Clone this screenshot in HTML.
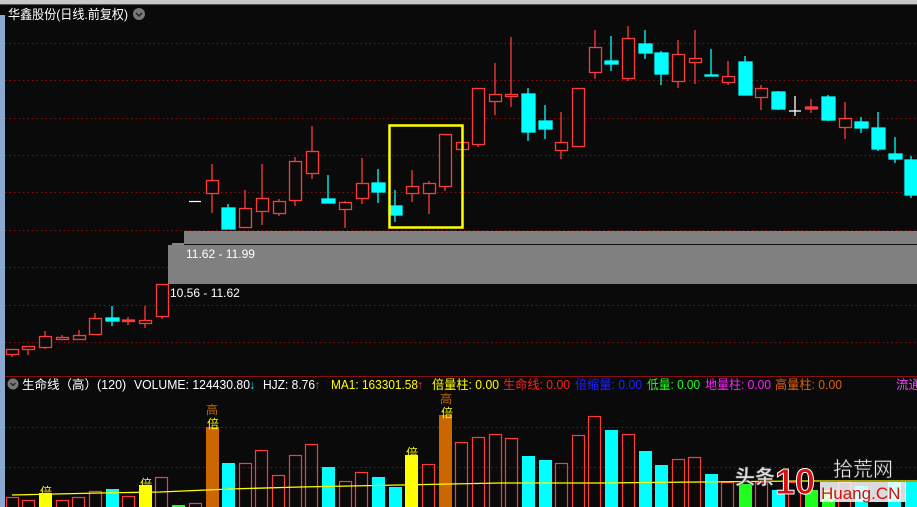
<!DOCTYPE html>
<html><head><meta charset="utf-8"><style>
html,body{margin:0;padding:0;background:#0a0a0a;width:917px;height:507px;overflow:hidden}
svg{display:block}
text{font-family:"Liberation Sans","Noto Sans CJK SC",sans-serif}
</style></head><body>
<svg width="917" height="507" viewBox="0 0 917 507" xmlns="http://www.w3.org/2000/svg">
<rect width="917" height="507" fill="#0a0a0a"/>
<rect x="0" y="0" width="917" height="4" fill="#c8c8c8"/>
<rect x="0" y="4" width="917" height="1" fill="#555"/>
<rect x="0" y="15" width="5" height="492" fill="#8aa8d0"/>
<g stroke="#8a1010" stroke-dasharray="1.5,3" stroke-width="1">
<line x1="5" y1="43.5" x2="917" y2="43.5"/><line x1="5" y1="80.5" x2="917" y2="80.5"/>
<line x1="5" y1="118.5" x2="917" y2="118.5"/><line x1="5" y1="155.5" x2="917" y2="155.5"/>
<line x1="5" y1="192.5" x2="917" y2="192.5"/><line x1="5" y1="230.5" x2="917" y2="230.5"/>
<line x1="5" y1="267.5" x2="917" y2="267.5"/><line x1="5" y1="305.5" x2="917" y2="305.5"/>
<line x1="5" y1="342.5" x2="917" y2="342.5"/>
<line x1="5" y1="427.5" x2="917" y2="427.5"/><line x1="5" y1="467.5" x2="917" y2="467.5"/>
</g>
<rect x="184" y="231" width="733" height="13" fill="#808080"/>
<rect x="168" y="245" width="749" height="39" fill="#808080"/>
<line x1="168" y1="244.5" x2="917" y2="244.5" stroke="#111"/>
<line x1="172" y1="244" x2="184" y2="244" stroke="#fff"/>
<text x="186" y="258" font-size="12" fill="#fff">11.62 - 11.99</text>
<text x="170" y="297" font-size="12" fill="#fff">10.56 - 11.62</text>
<text x="8" y="19" font-size="13" fill="#fff" textLength="120" lengthAdjust="spacingAndGlyphs">华鑫股份(日线.前复权)</text>
<circle cx="139" cy="14" r="6" fill="#777"/><path d="M136 13l3 3 3-3" stroke="#222" stroke-width="1.5" fill="none"/>
<line x1="189" y1="201.5" x2="201" y2="201.5" stroke="#fff" stroke-width="1.2"/>
<g stroke-width="1.3">
<g stroke="#ff3a3a" fill="#0a0a0a">
<line x1="12" y1="349" x2="12" y2="357"/><rect x="6.5" y="349.5" width="12" height="5"/>
<line x1="28" y1="346" x2="28" y2="355"/><rect x="22.5" y="346.5" width="12" height="3"/>
<line x1="45" y1="331" x2="45" y2="349"/><rect x="39.5" y="336.5" width="12" height="11"/>
<line x1="62" y1="335" x2="62" y2="339"/><rect x="56.5" y="337.5" width="12" height="2"/>
<line x1="79" y1="330" x2="79" y2="339"/><rect x="73.5" y="335.5" width="12" height="4"/>
<line x1="95" y1="313" x2="95" y2="335"/><rect x="89.5" y="318.5" width="12" height="16"/>
<line x1="128" y1="317" x2="128" y2="325"/><rect x="122.5" y="320" width="12" height="1.5" fill="#ff3a3a"/>
<line x1="145" y1="306" x2="145" y2="328"/><rect x="139.5" y="320.5" width="12" height="3"/>
<line x1="162" y1="284" x2="162" y2="319"/><rect x="156.5" y="284.5" width="12" height="32"/>
<line x1="212" y1="164" x2="212" y2="213"/><rect x="206.5" y="180.5" width="12" height="13"/>
<line x1="245" y1="190" x2="245" y2="227"/><rect x="239.5" y="208.5" width="12" height="19"/>
<line x1="262" y1="164" x2="262" y2="225"/><rect x="256.5" y="198.5" width="12" height="13"/>
<line x1="279" y1="199" x2="279" y2="216"/><rect x="273.5" y="201.5" width="12" height="12"/>
<line x1="295" y1="157" x2="295" y2="206"/><rect x="289.5" y="161.5" width="12" height="39"/>
<line x1="312" y1="126" x2="312" y2="179"/><rect x="306.5" y="151.5" width="12" height="22"/>
<line x1="345" y1="201" x2="345" y2="228"/><rect x="339.5" y="202.5" width="12" height="7"/>
<line x1="362" y1="158" x2="362" y2="204"/><rect x="356.5" y="183.5" width="12" height="15"/>
<line x1="412" y1="170" x2="412" y2="202"/><rect x="406.5" y="186.5" width="12" height="7"/>
<line x1="429" y1="181" x2="429" y2="214"/><rect x="423.5" y="183.5" width="12" height="10"/>
<line x1="445" y1="134" x2="445" y2="191"/><rect x="439.5" y="134.5" width="12" height="52"/>
<line x1="462" y1="142" x2="462" y2="149"/><rect x="456.5" y="142.5" width="12" height="7"/>
<line x1="478" y1="88" x2="478" y2="147"/><rect x="472.5" y="88.5" width="12" height="56"/>
<line x1="495" y1="63" x2="495" y2="115"/><rect x="489.5" y="94.5" width="12" height="7"/>
<line x1="511" y1="37" x2="511" y2="107"/><rect x="505.5" y="94.5" width="12" height="2"/>
<line x1="561" y1="112" x2="561" y2="159"/><rect x="555.5" y="142.5" width="12" height="8"/>
<line x1="578" y1="88" x2="578" y2="146"/><rect x="572.5" y="88.5" width="12" height="58"/>
<line x1="595" y1="30" x2="595" y2="79"/><rect x="589.5" y="47.5" width="12" height="25"/>
<line x1="628" y1="26" x2="628" y2="81"/><rect x="622.5" y="38.5" width="12" height="40"/>
<line x1="678" y1="40" x2="678" y2="88"/><rect x="672.5" y="54.5" width="12" height="27"/>
<line x1="695" y1="30" x2="695" y2="84"/><rect x="689.5" y="58.5" width="12" height="4"/>
<line x1="728" y1="61" x2="728" y2="85"/><rect x="722.5" y="76.5" width="12" height="6"/>
<line x1="761" y1="85" x2="761" y2="110"/><rect x="755.5" y="88.5" width="12" height="9"/>
<line x1="811" y1="99" x2="811" y2="113"/><rect x="805.5" y="107" width="12" height="2" fill="#ff3a3a"/>
<line x1="845" y1="102" x2="845" y2="139"/><rect x="839.5" y="118.5" width="12" height="9"/>
</g>
<g stroke="#00ffff" fill="#00ffff">
<line x1="112" y1="306" x2="112" y2="326"/><rect x="106" y="318" width="13" height="3"/>
<line x1="228" y1="204" x2="228" y2="229"/><rect x="222" y="208" width="13" height="21"/>
<line x1="328" y1="175" x2="328" y2="203"/><rect x="322" y="199" width="13" height="4"/>
<line x1="378" y1="169" x2="378" y2="203"/><rect x="372" y="183" width="13" height="9"/>
<line x1="395" y1="190" x2="395" y2="222"/><rect x="389" y="206" width="13" height="9"/>
<line x1="528" y1="88" x2="528" y2="141"/><rect x="522" y="94" width="13" height="38"/>
<line x1="545" y1="105" x2="545" y2="139"/><rect x="539" y="121" width="13" height="8"/>
<line x1="611" y1="36" x2="611" y2="71"/><rect x="605" y="61" width="13" height="3"/>
<line x1="645" y1="30" x2="645" y2="59"/><rect x="639" y="44" width="13" height="9"/>
<line x1="661" y1="51" x2="661" y2="85"/><rect x="655" y="53" width="13" height="21"/>
<line x1="711" y1="49" x2="711" y2="76"/><rect x="705" y="75" width="13" height="1"/>
<line x1="745" y1="56" x2="745" y2="95"/><rect x="739" y="62" width="13" height="33"/>
<line x1="778" y1="91" x2="778" y2="110"/><rect x="772" y="92" width="13" height="17"/>
<line x1="828" y1="95" x2="828" y2="121"/><rect x="822" y="97" width="13" height="23"/>
<line x1="861" y1="117" x2="861" y2="133"/><rect x="855" y="122" width="13" height="6"/>
<line x1="878" y1="112" x2="878" y2="151"/><rect x="872" y="128" width="13" height="21"/>
<line x1="895" y1="137" x2="895" y2="163"/><rect x="889" y="154" width="13" height="5"/>
<line x1="911" y1="156" x2="911" y2="198"/><rect x="905" y="160" width="13" height="35"/>
</g>
<g stroke="#fff"><line x1="795" y1="96" x2="795" y2="116"/><line x1="789" y1="111" x2="801" y2="111"/></g>
</g>
<rect x="389.5" y="125.5" width="73" height="102" fill="none" stroke="#ffff00" stroke-width="2.5"/>
<line x1="5" y1="376.5" x2="917" y2="376.5" stroke="#8a1010"/>
<circle cx="13" cy="384" r="5.5" fill="#777"/><path d="M10.5 383l2.5 2.5 2.5-2.5" stroke="#222" stroke-width="1.3" fill="none"/>
<g font-size="12.5">
<text x="22" y="389" fill="#fff">生命线（高）(120)</text>
<text x="134" y="389" fill="#fff" textLength="116" lengthAdjust="spacingAndGlyphs">VOLUME: 124430.80</text>
<text x="249" y="389" fill="#00e0ff">↓</text>
<text x="263" y="389" fill="#fff" textLength="52" lengthAdjust="spacingAndGlyphs">HJZ: 8.76</text>
<text x="314" y="389" fill="#ff3030">↑</text>
<text x="331" y="389" fill="#ffff00" textLength="87" lengthAdjust="spacingAndGlyphs">MA1: 163301.58</text>
<text x="417" y="389" fill="#ff3030">↑</text>
<text x="432" y="389" fill="#ffff00" textLength="67" lengthAdjust="spacingAndGlyphs">倍量柱: 0.00</text>
<text x="503" y="389" fill="#ff2020" textLength="67" lengthAdjust="spacingAndGlyphs">生命线: 0.00</text>
<text x="575" y="389" fill="#2020ff" textLength="67" lengthAdjust="spacingAndGlyphs">倍缩量: 0.00</text>
<text x="647" y="389" fill="#20ff20" textLength="53" lengthAdjust="spacingAndGlyphs">低量: 0.00</text>
<text x="705" y="389" fill="#ff20ff" textLength="66" lengthAdjust="spacingAndGlyphs">地量柱: 0.00</text>
<text x="775" y="389" fill="#e06010" textLength="67" lengthAdjust="spacingAndGlyphs">高量柱: 0.00</text>
<text x="896" y="389" fill="#ff40ff">流通</text>
</g>
<g stroke-width="1.2">
<g fill="none" stroke="#ff3a3a">
<rect x="6.5" y="497.5" width="12" height="12"/><rect x="22.5" y="500.5" width="12" height="9"/>
<rect x="56.5" y="500.5" width="12" height="9"/><rect x="72.5" y="497.5" width="12" height="12"/>
<rect x="89.5" y="491.5" width="12" height="18"/><rect x="122.5" y="496.5" width="12" height="13"/>
<rect x="155.5" y="477.5" width="12" height="32"/><rect x="189.5" y="503.5" width="12" height="6"/>
<rect x="239.5" y="463.5" width="12" height="46"/><rect x="255.5" y="450.5" width="12" height="59"/>
<rect x="272.5" y="475.5" width="12" height="34"/><rect x="289.5" y="455.5" width="12" height="54"/>
<rect x="305.5" y="444.5" width="12" height="65"/><rect x="339.5" y="481.5" width="12" height="28"/>
<rect x="355.5" y="472.5" width="12" height="37"/><rect x="422.5" y="464.5" width="12" height="45"/>
<rect x="455.5" y="442.5" width="12" height="67"/><rect x="472.5" y="437.5" width="12" height="72"/>
<rect x="489.5" y="434.5" width="12" height="75"/><rect x="505.5" y="438.5" width="12" height="71"/>
<rect x="555.5" y="463.5" width="12" height="46"/><rect x="572.5" y="435.5" width="12" height="74"/>
<rect x="588.5" y="416.5" width="12" height="93"/><rect x="622.5" y="434.5" width="12" height="75"/>
<rect x="672.5" y="459.5" width="12" height="50"/><rect x="688.5" y="457.5" width="12" height="52"/>
<rect x="721.5" y="482.5" width="12" height="27"/><rect x="755.5" y="482.5" width="12" height="27"/>
<rect x="788.5" y="482.5" width="12" height="27"/><rect x="838.5" y="482.5" width="12" height="27"/>
</g>
<g stroke="none">
<rect x="39" y="493" width="13" height="14" fill="#ffff00"/>
<rect x="139" y="485" width="13" height="22" fill="#ffff00"/>
<rect x="405" y="455" width="13" height="52" fill="#ffff00"/>
<rect x="106" y="489" width="13" height="18" fill="#00ffff"/>
<rect x="172" y="505" width="13" height="2" fill="#20ff20"/>
<rect x="206" y="427" width="13" height="80" fill="#cc6600"/>
<rect x="439" y="415" width="13" height="92" fill="#cc6600"/>
<rect x="222" y="463" width="13" height="44" fill="#00ffff"/>
<rect x="322" y="467" width="13" height="40" fill="#00ffff"/>
<rect x="372" y="477" width="13" height="30" fill="#00ffff"/>
<rect x="389" y="487" width="13" height="20" fill="#00ffff"/>
<rect x="522" y="456" width="13" height="51" fill="#00ffff"/>
<rect x="539" y="460" width="13" height="47" fill="#00ffff"/>
<rect x="605" y="430" width="13" height="77" fill="#00ffff"/>
<rect x="639" y="451" width="13" height="56" fill="#00ffff"/>
<rect x="655" y="465" width="13" height="42" fill="#00ffff"/>
<rect x="705" y="474" width="13" height="33" fill="#00ffff"/>
<rect x="739" y="484" width="13" height="23" fill="#20ff20"/>
<rect x="772" y="490" width="13" height="17" fill="#00ffff"/>
<rect x="805" y="490" width="13" height="17" fill="#20ff20"/>
<rect x="822" y="490" width="13" height="17" fill="#20ff20"/>
<rect x="855" y="486" width="13" height="21" fill="#00ffff"/>
<rect x="888" y="482" width="13" height="25" fill="#00ffff"/>
<rect x="905" y="482" width="13" height="25" fill="#00ffff"/>
</g>
</g>
<polyline points="12,495 100,493 160,492 230,489 300,487 400,485 450,484 500,483 600,483 700,482 800,481 917,481" fill="none" stroke="#ffff00" stroke-width="1.3"/>
<g font-size="12">
<text x="40" y="496" fill="#ffff00">倍</text>
<text x="140" y="488" fill="#ffff00">倍</text>
<text x="406" y="457" fill="#ffff00">倍</text>
<text x="206" y="414" fill="#cc6600">高</text><text x="207" y="428" fill="#ffff00">倍</text>
<text x="440" y="403" fill="#cc6600">高</text><text x="441" y="417" fill="#ffff00">倍</text>
</g>
<text x="735" y="484" font-size="20" font-weight="bold" fill="#ddd" stroke="#555" stroke-width="0.5">头条</text>
<text x="775" y="494" font-size="36" font-weight="bold" fill="#d41010" stroke="#fff" stroke-width="1">10</text>
<text x="833" y="476" font-size="20" fill="#fff" stroke="#333" stroke-width="0.6">拾荒网</text>
<rect x="820" y="482" width="86" height="20" fill="#fff" opacity="0.85"/>
<text x="821" y="499" font-size="17" fill="#d41010">Huang.CN</text>
</svg>
</body></html>
